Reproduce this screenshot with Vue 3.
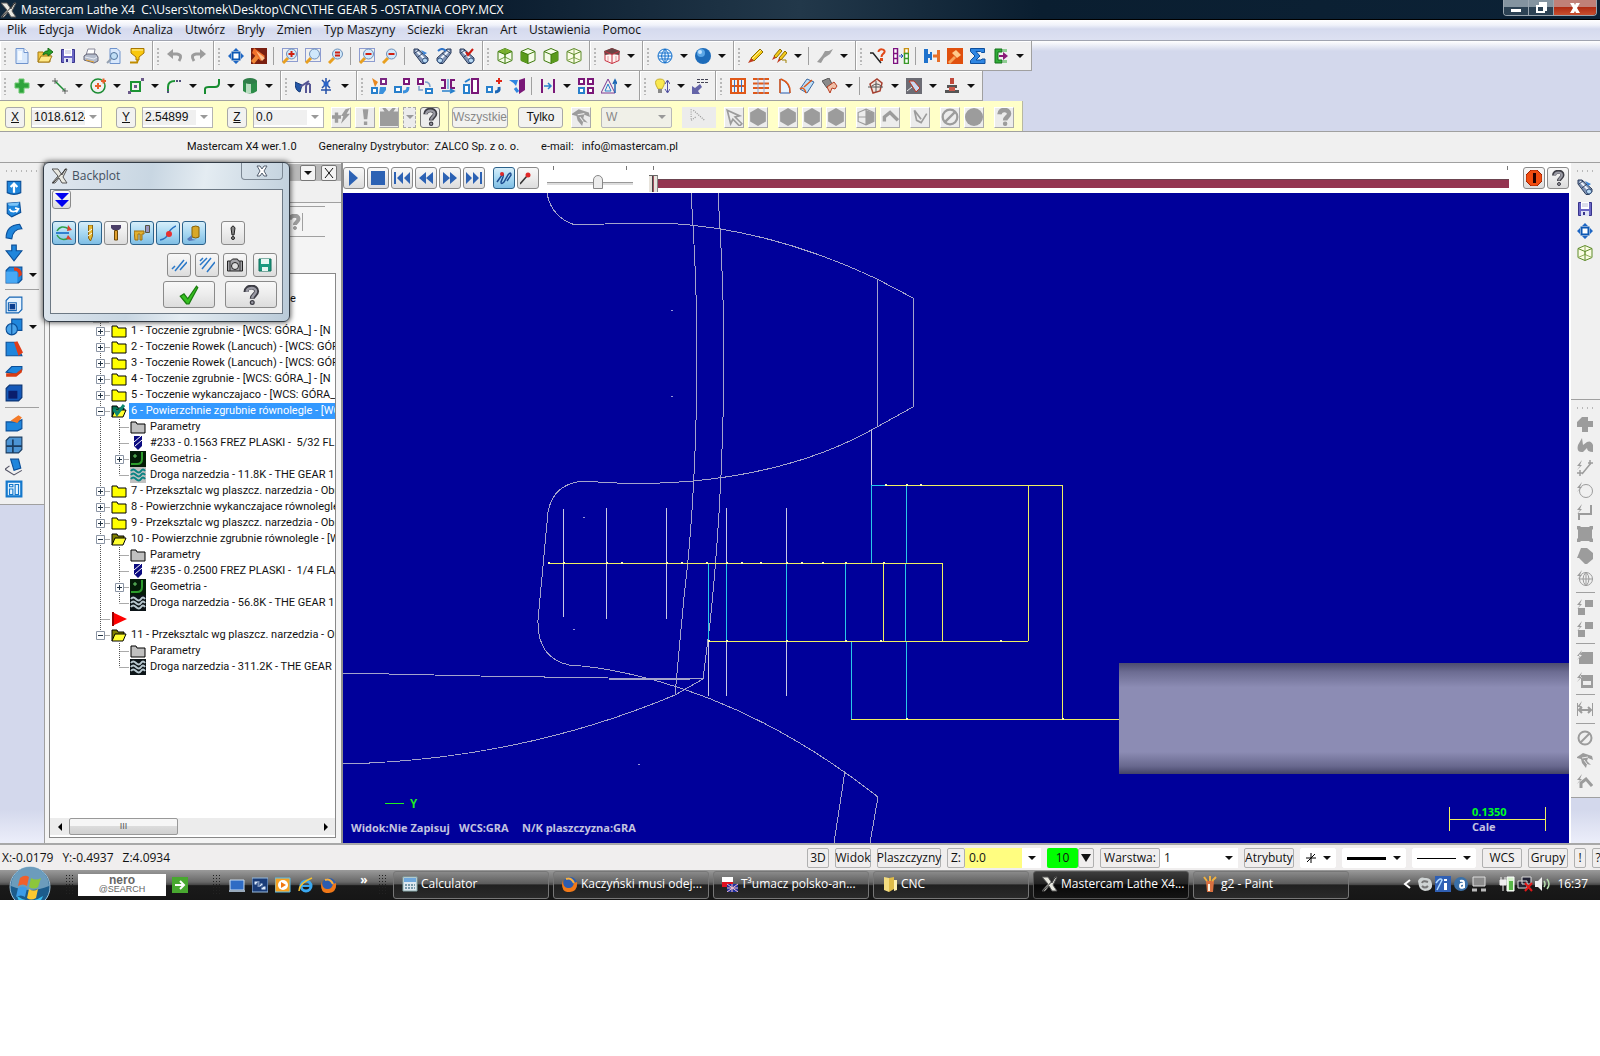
<script setup>
import { h, ref } from "vue";

// ---- icon helpers (16x16 grid) ----
const box = (stroke, fill, faces = "") =>
  `<path d="M8 .5l7 3v9l-7 3-7-3v-9z" fill="${fill}" stroke="${stroke}"/>${faces}<path d="M1 3.500l7 3 7-3M8 6.500v9" fill="none" stroke="${stroke}"/>`;
const lens = (mark = "", frame = "") =>
  `${frame ? '<path d="M.5 .5h15v13H.5z" fill="none" stroke="#2a48b0" stroke-dasharray="1 1"/>' : ""}<path d="M1 15l5-5" stroke="#e8a020" stroke-width="3"/><circle cx="9.500" cy="6" r="5" fill="#cfe8fb" stroke="#6d8fb8"/>${mark}`;
const spy = (extra) =>
  `<path d="M1 1l4 0 10 9v3l-3 2.500H9L1 5z" fill="#7f93b4" stroke="#2c3d5c"/><path d="M3 2.500l8 8" stroke="#eef4fc" stroke-width="2"/><path d="M2 5l4-3M5 9l5-4" stroke="#2c3d5c"/><circle cx="12" cy="12.500" r="2.500" fill="#b9daf4" stroke="#33507c"/>${extra}`;
const blue = (d, extra = "") =>
  `<path d="${d}" fill="#1f86dc" stroke="#0b4f98"/>${extra}`;
const folder = (fill) =>
  `<path d="M1 3h5l1 2h8v9H1z" fill="${fill}" stroke="#000"/>`;
const grey = (d) => `<path d="${d}" fill="#9c9c9c"/>`;
const greyLine = (d, w = 1) =>
  `<path d="${d}" fill="none" stroke="#9c9c9c" stroke-width="${w}"/>`;
const bolt = "M5 0L0 6h3L0 10l5-5H3z";
const quest = (fill, edge) =>
  `<path d="M4 5.500C4 .5 12.500.5 12.500 5c0 3-3.500 3-3.500 6" fill="none" stroke="${edge}" stroke-width="4"/><path d="M4.500 5.500C5 1.500 12 1.500 12 5c0 2.500-3 3-3 5.500" fill="none" stroke="${fill}" stroke-width="2"/><circle cx="9" cy="14" r="1.500" fill="${fill}" stroke="${edge}"/>`;
const coil = '<path d="M1 4q2-3 5 0t5 0 4 0M1 8q2-3 5 0t5 0 4 0M1 12q2-3 5 0t5 0 4 0" fill="none" stroke="';
const ball = '<circle cx="8" cy="8" r="7" fill="';

const icons = {
  new: '<path d="M2 .5h8l4 4v11H2z" fill="#d8e8fc" stroke="#6f93cc"/><path d="M10 .5v4h4" fill="#fff" stroke="#6f93cc"/><path d="M4 3h4v9H4z" fill="#f4f9ff"/>',
  open: '<path d="M1 4h5l1 2h6v8H1z" fill="#f3c842" stroke="#a57b13"/><path d="M1 14l3-6h11l-3 6z" fill="#ffe987" stroke="#a57b13"/><path d="M6 6q2-4 5-3V0l5 4-5 4V6q-3-1-5 1z" fill="#28a028" stroke="#186c18"/>',
  save: '<path d="M1.500 1.500h13v13h-13z" fill="#6a66c4" stroke="#38348c"/><path d="M4 1h8v7H4z" fill="#fff"/><path d="M5 3h6M5 5h6" stroke="#b8bcd8"/><path d="M4 10h8v5H4z" fill="#dfe4f4"/><path d="M6 11h2v3H6z" fill="#38348c"/>',
  print: '<path d="M5 1h7l-1 6H3z" fill="#fff" stroke="#889"/><path d="M1 8l3-2h9l2 3v4l-4 2-10-3z" fill="#b4bccc" stroke="#667"/><path d="M2 9l9 2 3-2" fill="none" stroke="#e8ecf4"/><path d="M3 12l8 2" stroke="#e6a32e"/>',
  preview: '<path d="M4 .5h7l3 3v12H4z" fill="#d8e8fc" stroke="#6f93cc"/><circle cx="8" cy="8" r="3.500" fill="#c0def5" stroke="#50749c"/><path d="M1 15l4-4" stroke="#94a0b0" stroke-width="2"/>',
  funnel: '<path d="M2 .5h13V5l-5 4v3H7V9L2 5z" fill="#f9c80e" stroke="#a87600"/><path d="M3 2h11" stroke="#fff0a0"/><path d="M1 14.500h7l1-3" fill="none" stroke="#c08c00" stroke-width="2"/>',
  undo: greyLine("M3 6h7q6 1 2 7", 3) + grey("M0 6l6-5v10z"),
  redo: greyLine("M13 6H6q-6 1-2 7", 3) + grey("M16 6l-6-5v10z"),
  fit: '<path d="M8 0l3 3H5zM8 16l3-3H5zM0 8l3-3v6zM16 8l-3-3v6z" fill="#1d66c4"/><path d="M4.500 4.500h7v7h-7z" fill="#fff" stroke="#0d58b4" stroke-width="2"/>',
  hammer: '<path d="M0 0h16v16H0z" fill="#7a1f10"/><path d="M3 0l11 8-4 5-9-8z" fill="#f0702a"/><path d="M5 3l9 7-3 3z" fill="#ffc08a"/><path d="M0 13l5-6 3 3-5 6z" fill="#f08838"/>',
  zoomWin: lens('<path d="M9.500 3v6M6.500 6h6" stroke="#d02010" stroke-width="2"/>', true),
  zoomAll: lens("", true),
  zoomEq: lens('<path d="M7 4.500h5M7 7.500h5" stroke="#d02010" stroke-width="2"/>'),
  zoomOutWin: lens('<path d="M6.500 6h6" stroke="#d02010" stroke-width="2"/>', true),
  zoomOut: lens('<path d="M6.500 6h6" stroke="#d02010" stroke-width="2"/>'),
  spy: spy('<path d="M8 2l6 3-3 2z" fill="#3e86d8"/>'),
  spyR: `<g transform="matrix(-1 0 0 1 16 0)">${spy("")}</g><path d="M2 3q4-4 8 0" fill="none" stroke="#2f74c8" stroke-width="2"/>`,
  spyCheck: spy('<path d="M7 4l2 3 5-6" fill="none" stroke="#cc1a10" stroke-width="2"/>'),
  cubeTop: box("#3e7a0c", "#f4fbe8", '<path d="M8 .5l7 3-7 3-7-3z" fill="#7cb42c"/><path d="M8 0v9l-6 3M8 9l6 3" fill="none" stroke="#6ea03c"/>'),
  cubeL: box("#3e7a0c", "#f4fbe8", '<path d="M1 3.500l7 3v9l-7-3z" fill="#5a9a1c"/>'),
  cubeR: box("#3e7a0c", "#f4fbe8", '<path d="M15 3.500l-7 3v9l7-3z" fill="#5a9a1c"/>'),
  cubeW: box("#5c8a28", "#fafce4", '<path d="M1 12.500l7-3 7 3M8 .5v9" fill="none" stroke="#8cac58"/>'),
  cubeRed: box("#c83040", "#fff4f2", '<path d="M8 0l8 3-1 4-7-1-7 1-1-4z" fill="#6b4545"/><path d="M4 8v5M12 8v5" stroke="#e8a0a4"/>'),
  globe: '<circle cx="8" cy="8" r="7" fill="#eef7ff" stroke="#1470cc"/><path d="M1 8h14M8 1v14M2 5h12M2 11h12M8 1q-7 7 0 14M8 1q7 7 0 14" fill="none" stroke="#1470cc"/>',
  sphere: '<circle cx="8" cy="8" r="8" fill="#1e6cba"/><circle cx="6" cy="5" r="4" fill="#5ba6e6"/><circle cx="5" cy="4" r="2" fill="#c0e2ff"/>',
  pencil: '<path d="M3 10l9-9 3 3-9 9z" fill="#f5cc1a" stroke="#8d6d00"/><path d="M4 11l9-9" stroke="#fff0a0"/><path d="M0 15l3-5 3 3z" fill="#c23c20"/>',
  pencils: '<path d="M3 8l6-7 2 2-6 7zM8 10l6-7 2 2-6 7z" fill="#f5cc1a" stroke="#8d6d00"/><path d="M1 12l2-4 2 2zM6 15l2-5 2 2z" fill="#c23c20"/><path d="M11 12h4v3" fill="none" stroke="#a08000"/>',
  brush: grey("M8 3h4l4-2-3 5-6 4-3 5-4-1 5-6z"),
  ask: '<path d="M0 5h3l8 10" fill="none" stroke="#222" stroke-width="1.500"/><path d="M8.500 4c0-4 7-3 6 0-.5 2-3 2-3 5" fill="none" stroke="#e04818" stroke-width="2"/><path d="M10 10h3v3h-3z" fill="#e04818"/>',
  films: '<path d="M.5 .5h4v5h-4zM.5 5.500h4v5h-4zM.5 10.500h4v5h-4z" fill="#fff" stroke="#7d1180" stroke-width="1.500"/><path d="M11.500 .5h4v5h-4z" fill="#fff" stroke="#c89010" stroke-width="1.500"/><path d="M11.500 5.500h4v5h-4zM11.500 10.500h4v5h-4z" fill="#fff" stroke="#3a9828" stroke-width="1.500"/><path d="M6 8h4M8 6l2 2-2 2" stroke="#1c50c0" fill="none"/>',
  join: '<path d="M0 1h4v5h2V4h2v8H6v-2H4v5H0z" fill="#1f72cc"/><path d="M16 2v12h-3V9.500H9v-3h4V2z" fill="#e8702a"/>',
  hammer2: '<path d="M0 0h16v16H0z" fill="#e0500e"/><path d="M9 2l5 5-4 3-5-5z" fill="#ffca8c"/><path d="M1 14l6-6 2 2-6 6z" fill="#f9a45c"/>',
  sigma: '<path d="M.5 .5h14v4h-3l-1-1H6l4 4.500-4 4h5l1-1h3v4.500H.5v-3L5 8 .5 3.500z" fill="#2f86e2" stroke="#0e4f9c"/>',
  exit: '<path d="M9 1H2v14h7v-3H5V4h4z" fill="#30ac38" stroke="#127018"/><path d="M6 7h4V4l5 4-5 4V9H6z" fill="#8a1a78"/><path d="M11 1v3M13 1v3M11 12v3M13 12v3" stroke="#30ac38"/>',
  plus: '<path d="M5 1h5v4h5v5h-5v5H5v-5H1V5h4z" fill="#2fa43c" stroke="#6cc870"/>',
  line: '<path d="M3 3l10 10" stroke="#1c8c34" stroke-width="1.500"/><path d="M0 3h6M3 0v6M10 13h6M13 10v6" stroke="#666"/>',
  circle: '<circle cx="8" cy="8" r="7" fill="none" stroke="#1c8c34" stroke-width="1.500"/><path d="M5 8h6M8 5v6M11 3h5M13.500 .5v5" stroke="#e8602a" stroke-width="2"/>',
  rect: '<path d="M3 4h9v9H3z" fill="none" stroke="#1c9434" stroke-width="2"/><path d="M6 7h3v3H6zM13 0h3v3h-3zM0 13h3v3H0z" fill="#6c5a8a"/>',
  fillet: '<path d="M2 15V9q0-6 7-6" fill="none" stroke="#1c9434" stroke-width="2"/><path d="M10 3h6M2 15v-4" stroke="#50507a" stroke-width="2" stroke-dasharray="2 1"/>',
  spline: '<path d="M1 16v-5q0-2 4-2h6q4 0 4-4V1" fill="none" stroke="#178c30" stroke-width="2"/>',
  cylinder: '<path d="M1 3v10q7 5 14 0V3z" fill="#2c8c48"/><path d="M4 4v11h5V4z" fill="#b8dcc0"/><ellipse cx="8" cy="3" rx="7" ry="3" fill="#2f7d48"/>',
  drill: '<path d="M0 4l7 3-2 7q-5-1-5-10z" fill="#2458a8" stroke="#153a78"/><path d="M5 9l9-6M15 6q-4-1-4 3v6M15 6v9" fill="none" stroke="#565694" stroke-width="2"/>',
  star: '<path d="M8 0v16M4 2l8 8M12 2l-8 8M3 12h10" stroke="#2450a8" stroke-width="1.500"/><circle cx="8" cy="6" r="2.500" fill="#2a64c8"/>',
  xf1: '<path d="M1 10h5v5H1zM10 1h5v5h-5z" fill="#fff" stroke="#7a2882" stroke-width="2"/><path d="M1 10h5v5H1z" fill="#fff" stroke="#2880cc" stroke-width="2"/><path d="M1 0l6 4-3 5z" fill="#e88820"/><path d="M9 9h6v3l-3 4H8z" fill="#3a90dc"/>',
  xf2: '<path d="M1 9h6v5H1z" fill="#fff" stroke="#2880cc" stroke-width="2"/><path d="M10 1h5v5h-5z" fill="#fff" stroke="#7a1878" stroke-width="2"/><path d="M9 14q5 0 5-5" fill="none" stroke="#3a90dc" stroke-width="3"/>',
  xf3: '<path d="M1 1h5v5H1z" fill="#fff" stroke="#7a1878" stroke-width="2"/><path d="M9 11h6v4H9z" fill="#fff" stroke="#2880cc" stroke-width="2"/><path d="M8 4q5 0 5 5M2 8v4h4" fill="none" stroke="#7aa0cc" stroke-width="1.500"/>',
  xf4: '<path d="M1 2h4v8H1M15 2h-4v8h4" fill="none" stroke="#7a1878" stroke-width="2"/><path d="M8 1v10" stroke="#2880cc"/><path d="M2 13h11M10 11l4 2-4 2" stroke="#2880cc" fill="none" stroke-width="1.500"/>',
  xf5: '<path d="M9 1h6v14H9z" fill="#fff" stroke="#7a1878" stroke-width="2"/><path d="M1 7h5v8H1zM2 4l5-3" fill="#fff" stroke="#2880cc" stroke-width="2"/>',
  xf6: '<path d="M1 9h5v5H1z" fill="#fff" stroke="#2880cc" stroke-width="2"/><path d="M9 14q5 0 4-5" fill="none" stroke="#1c66b4" stroke-width="3"/><path d="M13 0v6M10 3h6" stroke="#e02818" stroke-width="2"/>',
  xf7: '<path d="M0 2h9l-2 6Q4 4 0 2z" fill="#2f86e2"/><path d="M10 2l6-2v12l-6 4z" fill="#7a1878"/><path d="M6 10l3 4" stroke="#2f86e2" stroke-width="3"/>',
  dim: '<path d="M2 1v14M14 1v14" stroke="#7a1878" stroke-width="2"/><path d="M4 8h7M8 5l3 3-3 3" fill="none" stroke="#2880cc" stroke-width="1.500"/>',
  quad: '<path d="M1 1h5v5H1zM10 1h5v5h-5z" fill="#fff" stroke="#7a1878" stroke-width="2"/><path d="M1 10h5v5H1z" fill="#fff" stroke="#2880cc" stroke-width="2"/><path d="M10 10h5v5h-5z" fill="#fff" stroke="#7a1878" stroke-width="2"/>',
  tri: '<path d="M7 1l7 14H0z" fill="none" stroke="#7a3890"/><path d="M4 13l3-7 3 7z" fill="none" stroke="#2880cc"/><path d="M14 15V4M12 6l2-4 2 4" fill="none" stroke="#1c66b4" stroke-width="1.500"/>',
  bulb: '<path d="M6 1q6 0 4 6l-2 4H4L2 7q-2-6 4-6z" fill="#f9e850" stroke="#c8b030"/><path d="M4 11h4v4H4z" fill="#888"/><path d="M13.500 3v11M11 6l2.500-4L16 6M11 11l2.500 4 2.500-4" fill="none" stroke="#5050a0"/>',
  step: '<path d="M5 1.500h11M5 4.500h11" stroke="#445" stroke-dasharray="3 1"/><path d="M0 16V8l3 2 5-4 2 3-4 4 2 3z" fill="#6464a8"/>',
  grid: '<path d="M1 1h14v14H1zM8 0v16M0 8h16" fill="none" stroke="#e05818" stroke-width="2"/><path d="M4.500 2v12M11.500 2v12" stroke="#3a70c0"/>',
  rows: '<path d="M0 1h16M0 5.500h16M0 10h16M0 15h16" stroke="#e05818" stroke-width="2"/><path d="M5 0v16M11 0v16" stroke="#96a8d0"/>',
  fin: '<path d="M4 1v14h10Q14 4 4 1z" fill="#e8f4ff" stroke="#2858a8"/><path d="M4 1v14M5 1q10 4 9 14" fill="none" stroke="#e05818" stroke-width="1.500"/>',
  roll: '<path d="M1 11L8 1l7 3-7 11z" fill="#bfe0f8" stroke="#3c68a0"/><path d="M1 11q4-3 6 4M5 9l8-7" fill="none" stroke="#e05818" stroke-width="1.500"/>',
  patch: '<path d="M0 3l7-3 3 6-5 4z" fill="#8a8a8a" stroke="#555"/><path d="M5 9l7-5 3 4-2 3-3-1-2 5z" fill="#f0c0a8" stroke="#b83c20"/>',
  surf: '<path d="M2 6l7-5 5 4-2 8-7 2z" fill="#f3e6e0" stroke="#a84030" stroke-width="1.500"/><path d="M4 8q5-4 9 0M8 3v11M0 9h15" fill="none" stroke="#555"/>',
  tex: '<path d="M0 0h16v16H0z" fill="#6c6c74"/><path d="M3 3h5l6 7-4 4z" fill="#c8d8f0" stroke="#c03420"/><path d="M1 13l5-4" stroke="#eee"/>',
  tower: '<path d="M6 0h4v6H6z" fill="#c04a3c"/><path d="M3 7h10v3H3zM1 12h14v3H1z" fill="#555"/><path d="M5 9h6v4H5z" fill="#c8584a"/>',
  floppyG: '<path d="M2 2h12v12H2z" fill="#1c9a80" stroke="#0c6c58"/><path d="M4 2h8v5H4zM5 10h6v4H5z" fill="#e6f6f2"/>',
  // left bar
  extrude: blue("M2 3h12v10q-6 3-12 0z", '<path d="M8 13V6M5 8l3-3 3 3" fill="none" stroke="#fff" stroke-width="2"/>'),
  revolve: blue("M2 3l11-1 1 9-8 4-4-3z", '<path d="M2 3l11-1-2 3H4z" fill="#7cc4f8"/><path d="M4 8q2 4 7 1M9 7l3 1-2 3" fill="none" stroke="#fff" stroke-width="1.500"/>'),
  sweep: blue("M1 14q0-11 12-12l2 4q-8 0-9 9z"),
  loft: blue("M6 1h4v5h5l-7 9-7-9h5z"),
  round: blue("M1 4l3-3h11v11l-3 3H1z", '<path d="M1 5h10v10H1z" fill="#48a8f4"/><path d="M8 1q7 0 7 7l-3 2Q13 4 8 4z" fill="#e03c18"/>'),
  shell: '<path d="M1 4l3-3h11v11l-3 3H1z" fill="#e8f4ff" stroke="#1464b4"/><path d="M3 6h7v7H3z" fill="#fff" stroke="#1464b4"/><path d="M4 7h5v5H4z" fill="#0a3f90"/>',
  bool: blue("M6 1h9v10H6z", '<circle cx="6" cy="10" r="5" fill="#4aa4ea" stroke="#0b4f98"/><path d="M6 5v10" stroke="#0b4f98"/>'),
  draft: blue("M1 2h8l6 12H1z", '<path d="M8 2l3-1 5 10-4 3z" fill="#e03c18"/>'),
  plate: blue("M1 9l5-5h9v3l-5 4z", '<path d="M1 10h9l5-4v3l-5 4H1z" fill="#d83c14"/>'),
  solid: '<path d="M1 4l3-3h11v11l-3 3H1z" fill="#1458b8" stroke="#0a3474"/><path d="M3 6h8v7H3z" fill="#0a1e6c"/>',
  push: blue("M1 7h10l4-2v8l-4 2H1z", '<path d="M5 6l7-5 3 2-4 5z" fill="#f47a28"/>'),
  mesh: '<path d="M1 4l3-3h11v11l-3 3H1z" fill="#4c94d4" stroke="#1a3c60"/><path d="M1 9h14M7 3v12" stroke="#1a3c60" stroke-width="1.500"/>',
  sheet: blue("M5 1h7l2 8-6 2z", '<path d="M4 7l-4 3 8 5 7-4" fill="none" stroke="#556"/>'),
  layout: '<path d="M1.500 1.500h13v13h-13z" fill="#e8f6ff" stroke="#1478cc" stroke-width="2"/><path d="M4 8h3v5H4zM9 4h3v9H9zM4 4h3v2H4z" fill="none" stroke="#1478cc"/>',
  // tree
  dir: folder("#ffff00"),
  params: folder("#c0c0c0"),
  dirOpen: '<path d="M1 14V3h5l1 2h6v3" fill="#808000" stroke="#000"/><path d="M1 14l3-7h11l-3 7z" fill="#ffff30" stroke="#000"/>',
  dirSel: '<path d="M1 14V3h5l1 2h6v3" fill="#0a7050" stroke="#000"/><path d="M1 14l3-7h11l-3 7z" fill="#ffff30" stroke="#000"/><path d="M3 6l3 5 7-9" fill="none" stroke="#108870" stroke-width="3"/>',
  mill: '<path d="M4 1h8v10l-4 4-4-4z" fill="#0a0a80"/><path d="M4 7l7-6M5 11l7-6" stroke="#fff"/>',
  geo: '<path d="M0 0h16v16H0z" fill="#041c08"/><path d="M1 13h6q5 0 5-5V1" fill="none" stroke="#2c9c2c" stroke-width="2"/><path d="M3 5h4M5 3v4" stroke="#6c6"/>',
  coilT: '<path d="M0 0h16v16H0z" fill="#c0c0c0"/>' + coil + '#0a8484" stroke-width="2"/>',
  coilD: '<path d="M0 0h16v16H0z" fill="#0c1418"/>' + coil + '#b8c8d0" stroke-width="2"/>',
  arrow: '<path d="M1 1l15 7-15 7z" fill="#f00"/><path d="M1 1h2v14H1z" fill="#900"/>',
  // grey snap bar
  snap1: greyLine("M4 4v9M0 8h8", 3) + grey("M12 1l4-1-3 5h3l-8 9 2-7H8z"),
  bang: grey("M6 1h5l-1 9H7zM7 12h3v3H7z"),
  env: grey("M0 3h4L2 0h3l3 3 3-3h3l-2 3h4v13H0z"),
  hex: grey("M8 0l7 4v8l-7 4-7-4V4z"),
  disc: '<circle cx="8" cy="8" r="8" fill="#9c9c9c"/>',
  cursor: greyLine("M2 2l11 5-4 1 6 6-2 2-6-6-2 4z", 1.5),
  pick: grey("M0 5l6-4 9 3 1 4-5-2-1 3 4 4-4-1-1 4-4-5-1-4-4-1z") + '<path d="M5 6l6-1M7 8l3 4" stroke="#eee"/>',
  dots: '<path d="M1 1v10l4-3M3 2l10 9" fill="none" stroke="#9c9c9c" stroke-dasharray="1 1"/>',
  halfBox: greyLine("M8 1l7 3v8l-7 3-7-3V4zM8 1v14M1 8h14") + grey("M8 2l7 2v8l-7 3z"),
  hook: greyLine("M3 12V8l5-4 7 7", 3),
  vee: greyLine("M3 2l2 9 4 2 5-8M3 2l6 8", 1.5),
  ban: greyLine("M3 13L13 3", 2) + '<circle cx="8" cy="8" r="6.500" fill="none" stroke="#9c9c9c" stroke-width="2"/>',
  help: quest("#9a9aa4", "#3c3c44"),
  helpG: quest("#9c9c9c", "#9c9c9c"),
  // backplot
  chev: '<path d="M1 1h14L8 8zM1 8h14l-7 7z" fill="#0000f0"/>',
  path: '<path d="M1 6q4-7 12-2M1 10q4 7 12 3" fill="none" stroke="#30a048" stroke-width="1.500"/><path d="M0 8h13" stroke="#3080d0" stroke-width="2"/><path d="M12 0l4 5-5 1zM12 10l4 5-6-1z" fill="#d84030"/>',
  bit: '<path d="M6.500 0h4v11l-2 5-2-3z" fill="#e8b830" stroke="#8a6410"/><path d="M6 7l4-3M6 11l4-3" stroke="#fff"/>',
  holder: '<path d="M3 0h10v3l-2 2H5L3 3z" fill="#4c4068"/><path d="M6.500 5.500h3V15h-3z" fill="#e0a030" stroke="#6c4808"/>',
  mould: '<path d="M0 6h10v3H8v6H6V9H4v6H1z" fill="#e0b030" stroke="#a07010"/><path d="M11.500 .5h4v7h-4z" fill="#9a94c0" stroke="#554"/>',
  node: '<path d="M0 15q6-1 8-6t8-8" fill="none" stroke="#2870c0" stroke-width="1.500"/><circle cx="9" cy="9" r="3" fill="#e83030"/>',
  stock: '<path d="M6 2q4-2 7 0v10q-3 2-7 0z" fill="#d8a828" stroke="#856008"/><path d="M1 14l5-4v4l4 1-7 1z" fill="#5878b8"/>',
  note: '<path d="M6 3q2-4 4 0L9 10H7z" fill="#888" stroke="#222"/><circle cx="8" cy="13" r="1.500" fill="#888" stroke="#222"/>',
  dash2: '<path d="M1 12l3-3M4 14l9-11M9 13l7-8" stroke="#2a78c8" stroke-width="1.500"/>',
  dash3: '<path d="M1 8l7-7M3 12L12 1M8 15l8-10M1 4l3-3" stroke="#2a78c8" stroke-width="1.500"/>',
  camera: '<path d="M.5 4h3l2-2h5l1 2h4v10H.5z" fill="#a4a4a8" stroke="#222"/><circle cx="8" cy="9" r="3.500" fill="#ddd" stroke="#222"/><path d="M3 4v10M13 4v10" stroke="#333"/>',
  ok: '<path d="M1 9l3-2 3 4 7-10 1 1-7 13H6z" fill="#36c020" stroke="#1a7c10"/>',
  // playback
  play: '<path d="M3 0l9 8-9 8z" fill="#2c62b4"/>',
  stop: '<path d="M1 1h14v14H1z" fill="#2c62b4"/>',
  first: '<path d="M0 2h2v12H0zM9 2v12L3 8zM16 2v12l-6-6z" fill="#2c62b4"/>',
  back: '<path d="M8 2v12L1 8zM15 2v12L8 8z" fill="#2c62b4"/>',
  fwd: '<path d="M1 2v12l7-6zM8 2v12l7-6z" fill="#2c62b4"/>',
  last: '<path d="M14 2h2v12h-2zM7 2v12l6-6zM0 2v12l6-6z" fill="#2c62b4"/>',
  trace: '<path d="M1 12l5-7q2-2 1 2l-2 5q0 3 3 0l4-7q3-4 3 0l-4 6" fill="none" stroke="#1c4c90" stroke-width="1.500"/><circle cx="6" cy="4" r="2" fill="#e02828"/>',
  pin: '<path d="M0 14l7-8" stroke="#333" stroke-width="1.500"/><circle cx="8" cy="5" r="2.500" fill="#e02828"/>',
  halt: '<path d="M5 0h6l5 5v6l-5 5H5l-5-5V5z" fill="#f04c10" stroke="#a02000"/><path d="M7 3h3v10H7z" fill="#200"/>',
  // right bar
  gPlus: grey("M5 1h6v4h5v6h-5v5H5v-5H0V6z"),
  gBlob: grey("M5 0L1 7q-2 8 5 7l4-4q0 4 6 4V7q-2-5-6-3L6 7z"),
  gLine: greyLine("M5 14L14 3M11 3h5M13 0v5M0 13h6M3 10v6", 1.5) + grey(bolt),
  gCirc: '<circle cx="9" cy="9" r="6.500" fill="none" stroke="#9c9c9c"/>' + grey(bolt),
  gStep: greyLine("M2 16v-6h12V1", 2) + grey(bolt),
  gSq: grey("M0 0h3l1 1h8l1-1h3v3l-1 1v8l1 1v3h-3l-1-1H4l-1 1H0v-3l1-1V4L0 3z"),
  gDia: grey("M4 0h6l6 5v6l-6 5H8l-6-6H0z"),
  gGlobe: '<circle cx="9" cy="9" r="6.500" fill="none" stroke="#9c9c9c"/>' + greyLine("M2 9h14M9 2v14M9 2q-6 7 0 14M9 2q6 7 0 14") + grey(bolt),
  gTwo: grey(bolt + "M8 1h8v7H8zM1 9h7v7H1z"),
  gOne: grey(bolt + "M2 5l3-3h11v12H2z"),
  gWin: grey(bolt + "M4 3h12v13H4z") + '<path d="M6 9h8v4H6z" fill="#eee"/>',
  gDim: greyLine("M.5 2v13M15.500 2v13") + greyLine("M2 9h12M5 6L2 9l3 3M11 6l3 3-3 3", 2) + grey(bolt),
  gHook: greyLine("M4 14V9l5-4 6 7", 3) + grey(bolt),
  // taskbar
  desk: '<path d="M1 3h14v10H1z" fill="#2f6cc4" stroke="#cde"/><path d="M0 13h16v2H0z" fill="#9ab"/>',
  wins: '<path d="M0 1h16v14H0z" fill="#1a3c78" stroke="#9bd"/><path d="M2 4h6v4H2zM5 6h6v4H5zM9 9h5v4H9z" fill="#dceafc" stroke="#1a3c78"/>',
  wmp: '<path d="M0 1h15v14H0z" fill="#f4a020" stroke="#5ac0f0"/><circle cx="8" cy="8" r="5" fill="#fff"/><path d="M6 5l5 3-5 3z" fill="#f07810"/>',
  ie: '<circle cx="8" cy="9" r="5" fill="none" stroke="#3aa8f0" stroke-width="3"/><path d="M4 9h9" stroke="#3aa8f0" stroke-width="2"/><path d="M1 14Q1 6 14 1" fill="none" stroke="#f4c030" stroke-width="1.500"/>',
  fox: ball + '#2c5cb0"/><path d="M1 4q0 9 6 8 4 0 5-5l3-1q1 9-7 10T0 8z" fill="#f07818"/><path d="M4 3q5-2 8 4" fill="none" stroke="#f8b040" stroke-width="2"/>',
  calc: '<path d="M1 1h14v14H1z" fill="#dfe8f0" stroke="#8aa"/><path d="M2 2h12v4H2z" fill="#6fa8dc"/><path d="M3 9h10M3 12h10" stroke="#79a" stroke-width="2" stroke-dasharray="2 1"/>',
  flag: '<path d="M0 1h11v5H0z" fill="#fff"/><path d="M0 6h11v5H0z" fill="#e01020"/><path d="M5 8h11v8H5z" fill="#2030a0"/><path d="M5 8l11 8M16 8L5 16M10 8v8M5 12h11" stroke="#f4c0c8"/>',
  dirV: '<path d="M2 1l5 1v14l-5-2z" fill="#f3dc80"/><path d="M7 2l5-1v12l-5 3z" fill="#e0bc48"/><path d="M12 4h3v10l-3 1z" fill="#fff0b0"/>',
  mcx: '<path d="M0 1h6l4 6 3-6h2l-4 8 4 6h-5l-3-5-4 5H0l6-7z" fill="#e8e8e0" stroke="#555"/><path d="M1 15L14 1" stroke="#333"/>',
  paint: '<path d="M4 5h8l-1 11H5z" fill="#d87040"/><path d="M5 5L2 1M8 5V0M10 5l4-4" stroke="#f0b040" stroke-width="2"/><path d="M6 8h2v7H6z" fill="#f8f0e0"/>',
  go: '<path d="M0 0h16v16H0z" fill="#48a830"/><path d="M3 8h8M8 4l4 4-4 4" fill="none" stroke="#fff" stroke-width="2"/>',
  skype: '<path d="M1 5q2-5 7-3 6-1 7 6 1 7-7 7-5-1-6-5z" fill="#cfd4d4"/><path d="M5 7q1-3 6-1M5 10q3 3 6 0" fill="none" stroke="#777" stroke-width="2"/>',
  info: '<path d="M0 0h16v16H0z" fill="#3060b4"/><path d="M9 3h3v2H9zM9 7h3v7H9z" fill="#fff"/><path d="M1 7q4-6 6-3L2 14" fill="none" stroke="#aed8ff" stroke-width="1.500"/>',
  disk: ball + '#3a70a8"/><path d="M7 5q4-1 4 2v5M11 8q-4-1-4 2t4 1" fill="none" stroke="#fff" stroke-width="2"/>',
  net: '<path d="M2 1h12v9H2z" fill="#8c8c8c" stroke="#ddd"/><path d="M1 14h5M10 14h5" stroke="#bbb" stroke-width="3"/>',
  power: '<path d="M8 1h7v14H8z" fill="#d8f4d0" stroke="#fff"/><path d="M10 5h4v9h-4z" fill="#58b848"/><path d="M1 4h6v5H1zM2 1v3M6 1v3M4 9v6" stroke="#eee" fill="#eee"/>',
  noNet: '<path d="M5 1h9v7H5zM1 5h9v7H1z" fill="#223" stroke="#ddd"/><path d="M8 7l7 8M15 7l-7 8" stroke="#e01818" stroke-width="2"/>',
  sound: '<path d="M0 5h3l4-4v14l-4-4H0z" fill="#f0f0f0"/><path d="M9 5q2 3 0 6M12 3q4 5 0 10" fill="none" stroke="#b8e0b0" stroke-width="1.500"/>',
};

const Icon = (p) =>
  h("svg", { class: "icon", viewBox: "0 0 16 16", "aria-hidden": "true", innerHTML: icons[p.name] });
Icon.props = ["name"];

// "|" is a divider, "v" a drop-down arrow
const split = (s) => s.split(" ");
const rowOne = [
  "new open save print preview funnel",
  "undo redo",
  "fit hammer | zoomWin zoomAll zoomEq | zoomOutWin zoomOut | spy spyR spyCheck",
  "cubeTop cubeL cubeR cubeW",
  "cubeRed v",
  "globe v sphere v",
  "pencil pencils v | brush v",
  "ask films | join hammer2 sigma exit v",
].map(split);
const rowTwo = [
  "plus v line v circle v rect v fillet v spline v cylinder v",
  "drill star v",
  "xf1 xf2 xf3 xf4 xf5 xf6 xf7 | dim v quad tri v",
  "bulb v step",
  "grid rows fin roll patch v | surf v tex v tower v",
].map(split);
const leftBar = split("extrude revolve sweep loft round+ | shell bool+ draft plate solid | push mesh sheet layout");
const rightTop = split("spy save fit cubeW");
const rightBottom = split(
  "gPlus gBlob gLine gCirc gStep gSq gDia gGlobe | gTwo gTwo | gOne gWin | gDim | ban pick gHook"
);
const snapGroups = ["cursor hex", "hex hex hex", "halfBox hook", "vee", "ban disc", "helpG"].map(split);

const menu = ["Plik", "Edycja", "Widok", "Analiza", "Utwórz", "Bryly", "Zmien", "Typ Maszyny", "Sciezki", "Ekran", "Art", "Ustawienia", "Pomoc"];
const axes = ref([
  { name: "X", value: "1018.61248" },
  { name: "Y", value: "2.54899" },
  { name: "Z", value: "0.0" },
]);

// a/b: guide cells, one per level
const op = (text, a = "plus", icon = "dir", selected = false) => ({ a, icon, text, selected });
const sub = (text, icon, b = "tee", a = "line") => ({ a, b, icon, text });
const tree = [
  op("1 - Toczenie zgrubnie - [WCS: GÓRA_] - [N"),
  op("2 - Toczenie Rowek (Lancuch) - [WCS: GÓRA"),
  op("3 - Toczenie Rowek (Lancuch) - [WCS: GÓRA"),
  op("4 - Toczenie zgrubnie - [WCS: GÓRA_] - [N"),
  op("5 - Toczenie wykanczajaco - [WCS: GÓRA_"),
  op("6 - Powierzchnie zgrubnie równolegle - [WC", "minus", "dirSel", true),
  sub("Parametry", "params"),
  sub("#233 - 0.1563 FREZ PLASKI -  5/32 FL", "mill"),
  sub("Geometria -", "geo", "plus"),
  sub("Droga narzedzia - 11.8K - THE GEAR 1", "coilT", "end"),
  op("7 - Przeksztalc wg plaszcz. narzedzia - Obr"),
  op("8 - Powierzchnie wykanczajace równolegle"),
  op("9 - Przeksztalc wg plaszcz. narzedzia - Obr"),
  op("10 - Powierzchnie zgrubnie równolegle - [W", "minus", "dirOpen"),
  sub("Parametry", "params"),
  sub("#235 - 0.2500 FREZ PLASKI -  1/4 FLA", "mill"),
  sub("Geometria -", "geo", "plus"),
  sub("Droga narzedzia - 56.8K - THE GEAR 1", "coilD", "end"),
  op("", "tee", "arrow"),
  op("11 - Przeksztalc wg plaszcz. narzedzia - Ob", "last", "dirOpen"),
  sub("Parametry", "params", "tee", "none"),
  sub("Droga narzedzia - 311.2K - THE GEAR", "coilD", "end", "none"),
];
const guide = (kind) => {
  const open = kind === "plus" || kind === "minus" || kind === "last";
  let d = "";
  if (kind === "line" || kind === "tee" || kind === "plus" || kind === "minus") d += "M9.5 0v16";
  if (kind === "end" || kind === "last") d += "M9.5 0v8";
  if (kind !== "line" && kind !== "none") d += "M9.5 8.5H19";
  let out = `<path d="${d}" fill="none" stroke="#555" stroke-dasharray="1 1"/>`;
  if (open) {
    out += '<path d="M5.500 4.500h8v8h-8z" fill="#fff" stroke="#8a94a4"/><path d="M7 8.500h5" stroke="#234"/>';
    if (kind !== "minus" && kind !== "last") out += '<path d="M9.500 6v5" stroke="#234"/>';
  }
  return out;
};

const players = split("play stop first back fwd last");
const views = split("path bit holder mould node stock");
const speed = ref(60);
const position = ref(0);

const whiteLines = [
  [563, 509, 617], [606, 508, 619], [666, 508, 619], [726, 508, 563], [786, 508, 563],
  [708, 641, 696], [726, 641, 696], [786, 641, 696], [871, 430, 485],
];
const cyanLines = [
  [708, 563, 641], [726, 563, 641], [786, 563, 641], [845, 563, 641], [905, 563, 641],
  [871, 485, 563], [906, 485, 563], [851, 641, 719], [906, 641, 719],
];
const specks = [[671, 310], [671, 396], [583, 517], [573, 629], [638, 764]];
const nodes = [
  [548, 563], [563, 563], [606, 563], [621, 563], [666, 563], [681, 563], [706, 563], [726, 563], [741, 563],
  [760, 563], [786, 563], [801, 563], [822, 563], [845, 563], [883, 563], [885, 485], [906, 485], [920, 485],
  [708, 641], [726, 641], [786, 641], [845, 641], [880, 641], [1000, 641], [906, 719], [1062, 719],
];

const tasks = [
  { icon: "calc", text: "Calculator" },
  { icon: "fox", text: "Kaczyński musi odej..." },
  { icon: "flag", text: "T³umacz polsko-an..." },
  { icon: "dirV", text: "CNC" },
  { icon: "mcx", text: "Mastercam Lathe X4...", active: true },
  { icon: "paint", text: "g2 - Paint" },
];
</script>

<template>
  <div class="screen">
    <header class="title-bar">
      <Icon name="mcx" />
      <span class="title">Mastercam Lathe X4&nbsp; C:\Users\tomek\Desktop\CNC\THE GEAR 5 -OSTATNIA COPY.MCX</span>
      <div class="win-buttons">
        <button aria-label="Minimize"><svg viewBox="0 0 14 12"><path d="M2 7h10v3H2z" /></svg></button>
        <button aria-label="Restore"><svg viewBox="0 0 14 12"><path fill-rule="evenodd" d="M5 0h8v9h-2v2H2V3h3zM4 5v4h5V5z" /></svg></button>
        <button class="close" aria-label="Close"><svg viewBox="0 0 14 12"><path d="M2 1h4l1 2 1-2h4L9 6l3 5H8L7 9l-1 2H2l3-5z" /></svg></button>
      </div>
    </header>

    <nav class="menu-bar">
      <button v-for="m in menu" :key="m">{{ m }}</button>
    </nav>

    <div v-for="(row, r) in [rowOne, rowTwo]" :key="r" class="dock" :class="{ first: r === 0 }">
      <div v-for="(group, g) in row" :key="g" class="group">
        <i class="grip"></i>
        <template v-for="(item, i) in group" :key="i">
          <i v-if="item === '|'" class="divider"></i>
          <button v-else-if="item === 'v'" class="caret" aria-label="More"></button>
          <button v-else class="tool" :aria-label="item"><Icon :name="item" /></button>
        </template>
      </div>
    </div>

    <div class="dock ribbon-row">
      <div class="ribbon coords">
        <template v-for="a in axes" :key="a.name">
          <button class="key"><u>{{ a.name }}</u></button>
          <div class="combo">
            <input v-model="a.value" :aria-label="a.name" />
            <button class="caret pale" aria-label="History"></button>
          </div>
        </template>
        <div class="snaps">
          <button class="snap" aria-label="Fast point"><Icon name="snap1" /></button>
          <button class="snap" aria-label="Alert"><Icon name="bang" /></button>
          <button class="snap" aria-label="Snap settings"><Icon name="env" /></button>
          <button class="snap thin caret pale" aria-label="More"></button>
          <button class="snap framed" aria-label="Help"><Icon name="help" /></button>
        </div>
      </div>
      <div class="ribbon picks">
        <button class="wide off">Wszystkie</button>
        <button class="only">Tylko</button>
        <button class="snap" aria-label="Pick"><Icon name="pick" /></button>
        <div class="select w-list">
          <select aria-label="Mode"><option>W</option></select>
          <i class="caret pale"></i>
        </div>
        <button class="snap dotted" aria-label="Chain"><Icon name="dots" /></button>
        <div class="snap-groups">
          <div v-for="(group, g) in snapGroups" :key="g" class="snap-group">
            <button v-for="(item, i) in group" :key="i" class="snap" :aria-label="item"><Icon :name="item" /></button>
          </div>
        </div>
      </div>
    </div>

    <div class="banner">
      <span>Mastercam X4 wer.1.0</span>
      <span>Generalny Dystrybutor:&nbsp; ZALCO Sp. z o. o.</span>
      <span>e-mail:&nbsp;&nbsp; info@mastercam.pl</span>
    </div>

    <main class="work">
      <aside class="side left">
        <div class="side-tools">
          <i class="grip-h"></i>
          <template v-for="(item, i) in leftBar" :key="i">
            <i v-if="item === '|'" class="divider-h"></i>
            <div v-else class="side-row">
              <button class="tool" :aria-label="item"><Icon :name="item.replace('+', '')" /></button>
              <button v-if="item.endsWith('+')" class="caret" aria-label="More"></button>
            </div>
          </template>
        </div>
      </aside>

      <section class="manager">
        <div class="manager-head">
          <button class="mini caret" aria-label="Menu"></button>
          <button class="mini" aria-label="Close panel">
            <svg viewBox="0 0 12 12"><path d="M2 1l8 10M10 1L2 11" stroke="#111" /></svg>
          </button>
        </div>
        <div class="manager-body">
          <div class="manager-tools"><Icon name="helpG" /><i></i></div>
          <div class="tree-box">
            <ul class="tree">
              <li class="tail">e</li>
              <li class="machine"><Icon name="coilT" /></li>
              <li v-for="(n, i) in tree" :key="i">
                <svg class="guide" viewBox="0 0 19 16" v-html="guide(n.a)"></svg>
                <svg v-if="n.b" class="guide" viewBox="0 0 19 16" v-html="guide(n.b)"></svg>
                <Icon :name="n.icon" />
                <span :class="{ selected: n.selected }">{{ n.text }}</span>
              </li>
            </ul>
            <div class="scroll-x">
              <button aria-label="Scroll left"><svg viewBox="0 0 8 8"><path d="M6 0v8L2 4z" /></svg></button>
              <div class="thumb">III</div>
              <button aria-label="Scroll right"><svg viewBox="0 0 8 8"><path d="M2 0v8l4-4z" /></svg></button>
            </div>
          </div>
        </div>

        <div class="dialog">
          <div class="dialog-head">
            <Icon name="mcx" />
            <span>Backplot</span>
            <button aria-label="Close Backplot">
              <svg viewBox="0 0 12 12"><path d="M1 1h3l2 3 2-3h3L8 6l3 5H8L6 8l-2 3H1l3-5z" fill="#fff" stroke="#556070" /></svg>
            </button>
          </div>
          <div class="dialog-body">
            <button class="push tiny" aria-label="Expand"><Icon name="chev" /></button>
            <div class="views">
              <button v-for="v in views" :key="v" class="push" :class="{ on: v !== 'holder' }" :aria-label="v"><Icon :name="v" /></button>
              <button class="push note" aria-label="Options"><Icon name="note" /></button>
            </div>
            <div class="outputs">
              <button v-for="v in ['dash2', 'dash3', 'camera', 'floppyG']" :key="v" class="push" :aria-label="v"><Icon :name="v" /></button>
            </div>
            <div class="confirm">
              <button class="push" aria-label="OK"><Icon name="ok" /></button>
              <button class="push" aria-label="Help"><Icon name="help" /></button>
            </div>
          </div>
        </div>
      </section>

      <section class="stage">
        <div class="player">
          <button v-for="p in players" :key="p" class="push" :aria-label="p"><Icon :name="p" /></button>
          <button class="push on trace" aria-label="Trace"><Icon name="trace" /></button>
          <button class="push" aria-label="Run"><Icon name="pin" /></button>
          <div class="speed">
            <div class="ticks"><i></i><i></i></div>
            <input v-model="speed" type="range" aria-label="Speed" />
          </div>
          <div class="progress">
            <div class="ticks"><i></i><i></i></div>
            <input v-model="position" type="range" aria-label="Position" />
          </div>
          <button class="push" aria-label="Halt"><Icon name="halt" /></button>
          <button class="push" aria-label="Help"><Icon name="help" /></button>
        </div>

        <svg class="viewport" viewBox="343 193 1226 650">
          <defs>
            <linearGradient id="tool" x1="0" y1="0" x2="0" y2="1">
              <stop offset="0" stop-color="#4c4c70" />
              <stop offset=".08" stop-color="#6c6c92" />
              <stop offset=".22" stop-color="#8c8cb4" />
              <stop offset=".8" stop-color="#8c8cb4" />
              <stop offset=".93" stop-color="#68688e" />
              <stop offset="1" stop-color="#444468" />
            </linearGradient>
          </defs>
          <g class="wire">
            <path d="M547 193Q551 217 575 225Q620 223 664 223Q769 228 877 279L913 298V407L877 427Q800 471 693 481Q640 486 583 481Q553 484 548 512L538 620Q537 658 569 665Q605 667 654 680Q770 712 878 797L870 843" />
            <path d="M877 279V427M845 771L834 843" />
            <path d="M718 193Q724 290 724 360Q723 500 710 623L703 679" />
            <path d="M691 193Q697 280 697 360Q696 500 684 597L675 695" />
            <path d="M343 673L480 676L608 678L703 679L675 695Q520 760 343 764M608 679L690 680" />
          </g>
          <path v-for="(l, i) in whiteLines" :key="'w' + i" class="white" :d="`M${l[0]}.5 ${l[1]}V${l[2]}`" />
          <path v-for="(l, i) in cyanLines" :key="'c' + i" class="cyan" :d="`M${l[0]}.5 ${l[1]}V${l[2]}`" />
          <path class="yellow" d="M885 485.500H1062.500V719M1028.500 485V641M548 563.500H942.500V641M883.500 563V641M708 641.500H1028M851 719.500H1119" />
          <path class="cyan" d="M871 485.500h14" />
          <rect v-for="(n, i) in nodes" :key="'n' + i" :x="n[0]" :y="n[1] - 1" width="2" height="2" fill="#ffffb0" />
          <rect v-for="(n, i) in specks" :key="'s' + i" :x="n[0]" :y="n[1]" width="2" height="1" fill="#9898d8" />
          <rect x="1119" y="663" width="450" height="111" fill="url(#tool)" />
          <path d="M385 803.500h19" class="green" />
          <text x="410" y="808" class="mono">Y</text>
          <text x="351" y="832">Widok:Nie Zapisuj</text>
          <text x="459" y="832">WCS:GRA</text>
          <text x="522" y="832">N/K plaszczyzna:GRA</text>
          <path class="scale" d="M1449.500 807v24M1545.500 807v24M1449 819.500h96" />
          <text x="1472" y="816" class="reading">0.1350</text>
          <text x="1472" y="831">Cale</text>
        </svg>
      </section>

      <aside class="side right">
        <div class="side-tools top">
          <i class="grip-h"></i>
          <div v-for="item in rightTop" :key="item" class="side-row">
            <button class="tool" :aria-label="item"><Icon :name="item" /></button>
          </div>
        </div>
        <div class="side-tools">
          <i class="grip-h"></i>
          <template v-for="(item, i) in rightBottom" :key="i">
            <i v-if="item === '|'" class="divider-h"></i>
            <div v-else class="side-row">
              <button class="tool" :aria-label="item"><Icon :name="item" /></button>
            </div>
          </template>
        </div>
      </aside>
    </main>

    <footer class="status">
      <span>X:-0.0179</span>
      <span>Y:-0.4937</span>
      <span>Z:4.0934</span>
      <div class="status-right">
        <button class="w22">3D</button>
        <button class="w36">Widok</button>
        <button class="w64">Plaszczyzny</button>
        <div class="pair">
          <button class="w18">Z:</button>
          <div class="select z-list"><select aria-label="Z"><option>0.0</option></select><i class="caret"></i></div>
        </div>
        <div class="pair">
          <button class="colour">10</button>
          <button class="caret big" aria-label="Colours"></button>
        </div>
        <div class="pair">
          <button class="w60">Warstwa:</button>
          <div class="select layer"><select aria-label="Warstwa"><option>1</option></select><i class="caret"></i></div>
        </div>
        <button class="w50">Atrybuty</button>
        <button class="pick-list w36" aria-label="Point style"><svg viewBox="0 0 12 12"><path d="M6 1v10M1 6h10M2 10l8-8" stroke="#000" /></svg><i class="caret"></i></button>
        <button class="pick-list w64" aria-label="Line width"><i class="rule thick"></i><i class="caret"></i></button>
        <button class="pick-list w64" aria-label="Line style"><i class="rule"></i><i class="caret"></i></button>
        <button class="w40">WCS</button>
        <button class="w40">Grupy</button>
        <button class="w12">!</button>
        <button class="w12">?</button>
      </div>
    </footer>

    <div class="taskbar">
      <button class="orb" aria-label="Start">
        <svg viewBox="0 0 42 42">
          <circle cx="21" cy="21" r="20" fill="#1c5c8c" stroke="#9cc0d8" />
          <path d="M2 20a19 19 0 0 1 38 0q-19 8-38 0z" fill="#6c9cbc" />
          <path d="M8 30q13 9 26 0-3 9-13 10T8 30z" fill="#3cc0f0" />
          <path d="M11 12q5-4 9-1l-2 9q-4-3-9 0z" fill="#f0602c" />
          <path d="M22 12q5 3 10 0l-3 9q-4 3-9 0z" fill="#8cc63c" />
          <path d="M9 22q5-3 9 0l-2 9q-4-3-9 0z" fill="#3c9ce8" />
          <path d="M20 23q5 3 9 0l-2 9q-5 3-9 0z" fill="#fcc830" />
        </svg>
      </button>
      <i class="grip-t"></i>
      <button class="nero"><b>nero</b><span>@SEARCH</span></button>
      <button class="go" aria-label="Search"><Icon name="go" /></button>
      <i class="grip-t"></i>
      <div class="quick">
        <button v-for="q in ['desk', 'wins', 'wmp', 'ie', 'fox']" :key="q" :aria-label="q"><Icon :name="q" /></button>
      </div>
      <button class="more">»</button>
      <i class="grip-t"></i>
      <div class="tasks">
        <button v-for="t in tasks" :key="t.text" :class="{ active: t.active }"><Icon :name="t.icon" />{{ t.text }}</button>
      </div>
      <div class="tray">
        <button class="fold" aria-label="Show hidden icons">
          <svg viewBox="0 0 8 10"><path d="M7 1L2 5l5 4" fill="none" stroke="#fff" stroke-width="2" /></svg>
        </button>
        <div><Icon v-for="t in ['skype', 'info', 'disk', 'net']" :key="t" :name="t" /></div>
        <div class="devices"><Icon v-for="t in ['power', 'noNet', 'sound']" :key="t" :name="t" /></div>
        <time>16:37</time>
      </div>
    </div>
  </div>
</template>

<style>
body {
  margin: 0;
  background: #fff;
}
</style>

<style scoped>
.screen {
  font: 12px/16px "Open Sans", "Noto Sans", sans-serif;
  color: #111;
  overflow: hidden;
}

.screen *,
.screen *::before {
  box-sizing: border-box;
}

button,
input,
select {
  margin: 0;
  padding: 0;
  border: 0;
  background: none;
  font: inherit;
  color: inherit;
  outline: none;
}

button {
  display: flex;
  align-items: center;
  justify-content: center;
  white-space: nowrap;
}

.icon {
  display: block;
  width: 16px;
  height: 16px;
  flex: none;
}

.caret::before {
  content: "";
  border: 4px solid transparent;
  border-top-color: #111;
  border-bottom: 0;
}

.caret.pale::before {
  border-top-color: #999;
}

.caret.big::before {
  border-width: 8px 5px 0;
}

/* title and menu */
.title-bar {
  display: flex;
  align-items: center;
  height: 20px;
  padding-left: 1px;
  gap: 4px;
  color: #fff;
  background: linear-gradient(90deg, #10283c, #0a1c2e 30%, #22384a 50%, #0a1e30 65%, #0c2236);
  border-bottom: 1px solid #000;
}

.win-buttons {
  display: flex;
  align-self: flex-start;
  margin-left: auto;
  margin-right: 3px;
  height: 16px;
  border: 1px solid #9aa6b0;
  border-top: 0;
  border-radius: 0 0 4px 4px;
  overflow: hidden;
}

.win-buttons button {
  width: 25px;
  background: linear-gradient(#8494a0 45%, #2c4254 50%);
  border-right: 1px solid #9aa6b0;
}

.win-buttons .close {
  width: 42px;
  border: 0;
  background: linear-gradient(#c08078 45%, #b02c14 50%, #c85030);
}

.win-buttons svg {
  width: 14px;
  fill: #fff;
}

.menu-bar {
  display: flex;
  gap: 12px;
  height: 21px;
  padding-left: 7px;
  background: linear-gradient(#fff, #f0f2fa 25%, #d5daee 45%, #dde1f2);
  border-bottom: 1px solid #a0a4b0;
}

/* tool bars */
.dock {
  display: flex;
  height: 30px;
  background: #d3d8ec;
}

.dock.first {
  background: linear-gradient(#fff, #d3d8ec 10px);
}

.group {
  display: flex;
  align-items: center;
  padding-right: 4px;
  background: #f0f0f0;
  border-right: 1px solid #a0a0a0;
  border-bottom: 1px solid #a0a0a0;
  box-shadow: inset 1px 1px #fff;
}

.grip {
  width: 4px;
  height: 18px;
  margin: 0 3px;
  background: radial-gradient(circle, #b8b8b8 1px, transparent 1px) 0 0 / 4px 4px;
}

.tool {
  width: 23px;
  height: 22px;
}

.group .caret {
  width: 15px;
  height: 22px;
}

.divider {
  width: 1px;
  height: 18px;
  margin-left: 3px;
  margin-right: 4px;
  background: #a0a0a0;
}

.ribbon-row {
  height: 31px;
  border-bottom: 1px solid #a0a0a0;
  font: 12px/16px "Liberation Sans", Arial, sans-serif;
}

.ribbon {
  display: flex;
  align-items: center;
  padding-top: 2px;
  background: #ffffc8;
  border-right: 1px solid #b8b8a0;
}

.coords {
  width: 449px;
  padding-left: 5px;
}

.picks {
  width: 574px;
  padding-left: 3px;
}

.key,
.wide,
.only {
  height: 21px;
  background: #f2f2f0;
  border: 1px solid #a8a8a8;
  border-radius: 3px;
}

.key {
  width: 20px;
  margin-right: 6px;
}

.wide {
  width: 56px;
}

.wide.off {
  color: #888;
}

.only {
  width: 45px;
  margin: 0 8px 0 10px;
}

.combo {
  display: flex;
  width: 71px;
  height: 21px;
  margin-right: 14px;
  background: #fff;
  border: 1px solid #b4b4b4;
}

.combo input {
  flex: 1;
  min-width: 0;
  margin: 2px 0;
  padding-left: 2px;
  background: #f0f0f0;
}

.combo .caret {
  width: 16px;
}

.snaps,
.snap-group {
  display: flex;
  gap: 4px;
}

.snaps {
  margin-left: -7px;
}

.snap {
  width: 20px;
  height: 21px;
  background: #ececec;
  border: 1px solid #fff;
  border-right-color: #aaa;
  border-bottom-color: #aaa;
}

.snap .icon {
  width: 18px;
  height: 18px;
}

.snap.thin {
  width: 13px;
  border: 1px dashed #aaa;
}

.snap.framed {
  border: 1px solid #777;
  border-radius: 3px;
}

.snap.dotted {
  width: 34px;
  margin-right: 8px;
  border: 0;
}

.snap-groups {
  display: flex;
  gap: 10px;
}

.select {
  display: grid;
  align-items: center;
}

.select > * {
  grid-area: 1 / 1;
}

.select select {
  appearance: none;
  width: 100%;
  height: 100%;
  padding-left: 4px;
}

.select .caret {
  display: flex;
  justify-self: end;
  margin-right: 5px;
  pointer-events: none;
}

.w-list {
  width: 71px;
  height: 21px;
  margin: 0 10px;
  color: #888;
  background: #f0f0e8;
  border: 1px solid #b8b8b8;
  border-radius: 2px;
}

.banner {
  display: flex;
  align-items: center;
  gap: 22px;
  height: 31px;
  padding-left: 187px;
  background: #f0f0f0;
  border-bottom: 1px solid #a0a0a0;
  font: 11px/16px Roboto, Arial, sans-serif;
}

/* work area */
.work {
  display: grid;
  grid-template-columns: 44px 299px 1fr 30px;
  background: #f0f0f0;
}

.side {
  background: linear-gradient(#d3d8ec 95%, #eceefa);
}

.side-tools {
  display: flex;
  flex-direction: column;
  padding-bottom: 4px;
  background: #f0f0f0;
  border-bottom: 1px solid #a0a0a0;
}

.side-tools.top {
  height: 237px;
}

.grip-h {
  height: 4px;
  margin: 6px 4px 3px;
  background: radial-gradient(circle, #b8b8b8 1px, transparent 1px) 0 0 / 5px 4px;
}

.side-row {
  display: flex;
  height: 22px;
  padding-left: 2px;
}

.left .icon {
  width: 18px;
  height: 18px;
}

.side-row .caret {
  width: 15px;
}

.divider-h {
  height: 1px;
  margin: 3px 5px;
  background: #a0a0a0;
}

.left .divider-h {
  margin-bottom: 4px;
}

.side.right {
  border-left: 1px solid #fff;
}

.manager {
  position: relative;
  display: flex;
  flex-direction: column;
  border-left: 1px solid #a0a0a0;
  border-right: 2px solid #909090;
}

.manager-head {
  display: flex;
  justify-content: flex-end;
  gap: 5px;
  height: 17px;
  padding: 1px 4px 0 0;
  margin-top: 1px;
  background: #b8b8b8;
}

.mini {
  width: 16px;
  height: 16px;
  background: #f4f4f4;
  border: 1px solid #777;
  border-radius: 2px;
}

.mini svg {
  width: 12px;
}

.manager-body {
  display: flex;
  flex: 1;
  flex-direction: column;
  margin-top: 21px;
  padding: 3px 5px 5px 4px;
  border-top: 1px solid #a0a0a0;
  background: #f4f4f4;
}

.manager-tools {
  display: flex;
  align-items: center;
  justify-content: flex-end;
  height: 31px;
  margin: 0 11px 36px 0;
  padding-right: 22px;
  border-top: 1px solid #a0a0a0;
  border-bottom: 1px solid #a0a0a0;
}

.manager-tools i {
  width: 1px;
  height: 18px;
  background: #a0a0a0;
}

.tree-box {
  display: flex;
  flex: 1;
  flex-direction: column;
  background: #fff;
  border: 1px solid #888;
}

.tree {
  flex: 1;
  margin: 0;
  padding: 17px 0 0;
  list-style: none;
  overflow: hidden;
  font: 11px/16px Roboto, Tahoma, sans-serif;
}

.tree li {
  display: flex;
  height: 16px;
  padding-left: 41px;
  white-space: pre;
}

.tree .tail {
  padding-left: 240px;
}

.tree .machine {
  padding-left: 42px;
}

.tree .icon {
  margin: 0 1px;
}

.tree span {
  margin-left: 1px;
  padding: 0 2px;
}

.tree .selected {
  flex: 1;
  color: #fff;
  background: #3399ff;
}

.guide {
  display: block;
  flex: none;
  width: 19px;
  height: 16px;
}

.scroll-x {
  display: flex;
  height: 17px;
  margin-bottom: 2px;
  background: #ececec;
}

.scroll-x button {
  width: 19px;
}

.scroll-x svg {
  width: 8px;
}

.thumb {
  width: 109px;
  margin-right: auto;
  border: 1px solid #999;
  border-radius: 2px;
  background: linear-gradient(#f6f6f6 45%, #dcdcdc 50%, #d0d0d0);
  color: #555;
  font: 9px/14px "Liberation Sans", sans-serif;
  text-align: center;
}

/* floating window */
.dialog {
  position: absolute;
  top: -1px;
  left: -2px;
  width: 247px;
  padding: 0 6px 7px;
  background: linear-gradient(100deg, #e2e9f0, #c8d6e2 40%, #e4ecf2 60%, #b9cad8);
  border: 1px solid #333c46;
  border-radius: 6px;
  box-shadow: 0 0 5px 1px rgba(0, 0, 0, 0.6);
}

.dialog-head {
  display: flex;
  align-items: center;
  gap: 4px;
  height: 26px;
  padding-left: 2px;
  color: #445060;
}

.dialog-head button {
  align-self: flex-start;
  width: 42px;
  height: 17px;
  margin-left: auto;
  border: 1px solid #7c8894;
  border-top: 0;
  border-radius: 0 0 4px 4px;
}

.dialog-head svg:last-child {
  height: 12px;
}

.dialog-body {
  padding: 0 5px 5px 1px;
  background: #f0f0f0;
  border: 1px solid #6c7884;
}

.push {
  width: 22px;
  height: 22px;
  background: linear-gradient(#f8f8f8, #ececec 50%, #dcdcdc);
  border: 1px solid #8a8a8a;
  border-radius: 3px;
}

.push.on {
  background: linear-gradient(#d6eefa, #a8d8f2 50%, #80bee4);
  border-color: #2c628b;
}

.dialog .push {
  width: 24px;
  height: 24px;
}

.dialog .tiny {
  width: 19px;
  height: 19px;
}

.views,
.outputs,
.confirm {
  display: flex;
}

.views {
  gap: 2px;
  margin-top: 12px;
}

.views .note {
  margin-left: 13px;
}

.outputs {
  justify-content: flex-end;
  gap: 4px;
  margin: 8px 0 4px;
}

.outputs .push:last-child {
  margin-left: 2px;
}

.confirm {
  justify-content: flex-end;
  gap: 10px;
}

.dialog .confirm .push {
  width: 52px;
  height: 27px;
}

.confirm .icon {
  width: 20px;
  height: 20px;
}

/* player and drawing */
.stage {
  min-width: 0;
  border-right: 1px solid #fff;
}

.player {
  display: flex;
  align-items: center;
  gap: 2px;
  height: 30px;
  background: #fff;
}

.player .trace {
  margin-left: 6px;
}

.speed {
  width: 86px;
  margin: 0 14px 0 6px;
}

.progress {
  flex: 1;
  margin-right: 12px;
}

.ticks {
  display: flex;
  justify-content: space-between;
  height: 11px;
  padding: 2px 6px 0;
}

.progress .ticks {
  padding: 2px 1px 0 4px;
}

.ticks i {
  width: 1px;
  height: 4px;
  background: #777;
}

.player input {
  display: block;
  appearance: none;
  width: 100%;
  height: 18px;
}

.speed input::-webkit-slider-runnable-track {
  height: 3px;
  background: #ddd;
  border-top: 1px solid #999;
}

.speed input::-webkit-slider-thumb {
  appearance: none;
  width: 10px;
  height: 14px;
  margin-top: -8px;
  background: #ececec;
  border: 1px solid #888;
  border-radius: 5px 5px 0 0;
}

.progress input::-webkit-slider-runnable-track {
  height: 9px;
  background: #943450;
  border-top: 1px solid #6c4450;
}

.progress input::-webkit-slider-thumb {
  appearance: none;
  width: 9px;
  height: 17px;
  margin-top: -5px;
  background: linear-gradient(90deg, transparent 3px, #444 3px, #444 4px, #a05060 4px, #a05060 5px, transparent 5px), #e8e4dc;
  border-top: 1px solid #666;
  border-right: 1px solid #888;
}

.viewport {
  display: block;
  width: 100%;
  background: #00009a;
  shape-rendering: crispEdges;
}

.viewport path {
  fill: none;
}

.wire {
  stroke: #a4a4cc;
}

.white {
  stroke: #c8c8e4;
}

.cyan {
  stroke: #28c8e8;
}

.yellow,
.scale {
  stroke: #f0f060;
}

.green {
  stroke: #20f020;
}

.viewport text {
  fill: #c4c4e0;
  font: bold 11px "Open Sans", sans-serif;
}

.viewport .mono {
  fill: #20f020;
  font: bold 12px "Liberation Mono", monospace;
}

.viewport .reading {
  fill: #00ff20;
}

/* status line */
.status {
  display: flex;
  align-items: center;
  gap: 9px;
  height: 27px;
  padding: 1px 0 0 2px;
  background: #f0eeee;
  border-top: 2px solid #a8a8a8;
}

.status-right {
  display: flex;
  gap: 6px;
  height: 20px;
  margin-left: auto;
  margin-right: -4px;
}

.status button {
  height: 20px;
  border: 1px solid #b0b0b0;
  border-radius: 2px;
}

.pair {
  display: flex;
}

.w12 {
  width: 12px;
}

.w18 {
  width: 18px;
}

.w22 {
  width: 22px;
}

.w36 {
  width: 36px;
}

.w40 {
  width: 40px;
}

.w50 {
  width: 50px;
}

.w60 {
  width: 60px;
}

.w64 {
  width: 64px;
}

.z-list {
  width: 76px;
  background: linear-gradient(90deg, #fffd80 57px, #fff 57px);
}

.layer {
  width: 78px;
  background: #fff;
}

.status .colour {
  width: 31px;
  background: #00ff00;
  border: 0;
}

.status .big {
  width: 16px;
}

.status .pick-list {
  justify-content: space-between;
  padding: 0 4px;
  background: #fff;
  border-color: #fff;
}

.pick-list svg {
  width: 12px;
}

.pick-list .caret {
  display: flex;
}

.rule {
  flex: 1;
  height: 1px;
  margin-right: 7px;
  background: #000;
}

.rule.thick {
  height: 3px;
}

/* task bar */
.taskbar {
  display: flex;
  align-items: center;
  height: 30px;
  color: #fff;
  background: linear-gradient(#9a9a9a, #686868 40%, #444 50%, #1a1a1a 52%, #161616);
  clip-path: inset(-5px 0 0 0);
}

.orb {
  align-self: flex-start;
  width: 42px;
  height: 34px;
  margin: -4px 14px 0 9px;
  overflow: hidden;
  align-items: flex-start;
}

.orb svg {
  width: 42px;
  flex: none;
}

.grip-t {
  width: 9px;
  height: 22px;
  background: radial-gradient(circle, #222 1px, transparent 1px) 0 0 / 3px 3px;
}

.nero {
  flex-direction: column;
  width: 88px;
  height: 22px;
  margin: 0 6px 0 4px;
  background: #fff;
  color: #666;
  font: 9px/9px "Liberation Sans", sans-serif;
}

.nero b {
  font-size: 12px;
}

.go {
  margin-right: 24px;
}

.quick {
  display: flex;
  gap: 7px;
  margin-left: 8px;
}

.more {
  width: 18px;
  height: 26px;
  margin: 0 5px 0 18px;
  align-items: flex-start;
  font-weight: bold;
}

.tasks {
  display: flex;
  flex: 1;
  gap: 4px;
  margin-left: 6px;
}

.tasks button {
  flex: 0 1 156px;
  justify-content: flex-start;
  gap: 3px;
  height: 28px;
  padding: 0 0 2px 8px;
  border: 1px solid #777;
  border-radius: 3px;
  background: linear-gradient(#8a8a8a, #5c5c5c 45%, #202020 50%, #2a2a2a);
}

.tasks .active {
  background: linear-gradient(#3c3c3c, #222 45%, #080808 50%, #141414);
  border-color: #555;
}

.tray {
  display: flex;
  align-items: center;
  gap: 6px;
  padding: 0 12px 2px 0;
}

.tray div {
  display: flex;
  gap: 2px;
}

.tray .devices {
  margin-left: 6px;
}

.fold svg {
  width: 8px;
}
</style>
